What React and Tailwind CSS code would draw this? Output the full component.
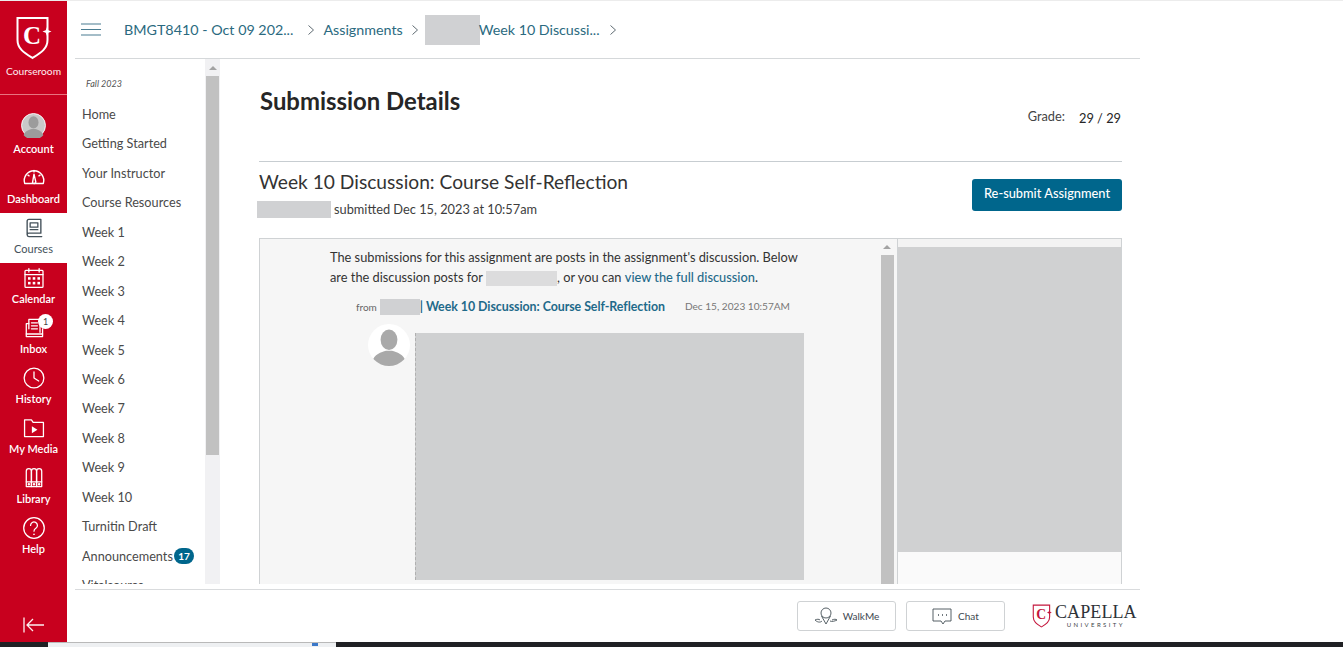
import React from "react";

const Ic = ({ children, s = 28 }) => (
  <svg width={s} height={s} viewBox="0 0 28 28" fill="none" stroke="currentColor" strokeWidth="1.5" strokeLinecap="round" strokeLinejoin="round">{children}</svg>
);

const Person = ({ fill = "#a5a5a5" }) => (
  <g fill={fill} stroke="none">
    <ellipse cx="14" cy="10.5" rx="5.6" ry="6.8" />
    <path d="M3 25c.8-5 6-6.2 9-7.2h4c3 1 8.2 2.2 9 7.2a15 15 0 0 1-22 0z" />
  </g>
);

const navItems = [
  ["Account", <svg key="a" width="29" height="29" viewBox="0 0 28 28"><circle cx="14" cy="14" r="13.4" fill="#c9c9c9" stroke="#fff" strokeWidth="1" /><Person fill="#9c9c9c" /></svg>],
  ["Dashboard", <Ic key="d" s={26}><path d="M4 21a10.5 10.5 0 1 1 20 0z" /><path d="M14 11l2 8.5a2 2 0 0 1-3.6.6z" /><path d="M14 7v1.5M7.5 12l1.2.8M20.5 12l-1.2.8" /></Ic>],
  ["Courses", <Ic key="c" s={24}><path d="M6 22V5.5A2 2 0 0 1 8 4h14v16H8a2 2 0 0 0-2 2 2 2 0 0 0 2 2h15" strokeWidth="1.6" /><rect x="9.5" y="8" width="9" height="5" /><path d="M9.5 16h9" /></Ic>],
  ["Calendar", <Ic key="cal" s={24}><rect x="3.5" y="5" width="21" height="20" rx="1" /><path d="M3.5 10h21M8 3v4M20 3v4" /><g fill="currentColor" stroke="none"><rect x="7" y="13" width="3" height="3" /><rect x="12.5" y="13" width="3" height="3" /><rect x="18" y="13" width="3" height="3" /><rect x="7" y="18.5" width="3" height="3" /><rect x="12.5" y="18.5" width="3" height="3" /><rect x="18" y="18.5" width="3" height="3" /></g></Ic>],
  ["Inbox", <Ic key="i" s={24}><path d="M8 15V4h13v15" /><path d="M11 8h7M11 11.5h7M11 15h7" /><path d="M8 9H5v12h19v-6" /><path d="M5 21v3h19v-3" /></Ic>],
  ["History", <Ic key="h" s={24}><circle cx="14" cy="14" r="11.5" /><path d="M14 7v7l5.5 3.5" /></Ic>],
  ["My Media", <Ic key="m" s={24}><path d="M3 24V4.5h8l2 3h12V24z" /><path d="M11.5 12v8l6.5-4z" fill="currentColor" stroke="none" /></Ic>],
  ["Library", <Ic key="l" s={24}><path d="M5 24V6a3 3 0 0 1 6 0v18z" /><path d="M11 24V6a3 3 0 0 1 6 0v18z" /><path d="M17 24V6a3 3 0 0 1 6 0v18z" /><path d="M5 18.5h18" /><circle cx="8" cy="21.3" r=".7" /><circle cx="14" cy="21.3" r=".7" /><circle cx="20" cy="21.3" r=".7" /></Ic>],
  ["Help", <svg key="q" width="24" height="24" viewBox="0 0 28 28" fill="none" stroke="currentColor" strokeWidth="1.5"><circle cx="14" cy="14" r="12" /><path d="M10 11a4 4 0 1 1 6.2 3.3c-1.4.9-2.2 1.7-2.2 3.4" strokeLinecap="round" /><circle cx="14" cy="21.3" r="1" fill="currentColor" stroke="none" /></svg>],
];

const courseNav = ["Home", "Getting Started", "Your Instructor", "Course Resources", "Week 1", "Week 2", "Week 3", "Week 4", "Week 5", "Week 6", "Week 7", "Week 8", "Week 9", "Week 10", "Turnitin Draft"];

const Chevron = () => (
  <svg width="8" height="12" viewBox="0 0 8 12" fill="none" stroke="#5f6b72" strokeWidth="1"><path d="M1.5 1.5 6.5 6l-5 4.5" /></svg>
);

const Shield = ({ w, h, stroke, cColor, size = 25 }) => (
  <svg width={w} height={h} viewBox="0 0 36 44" fill="none">
    <path d="M2 2h30v22c0 9-7 13-15 18C9 37 2 33 2 24z" stroke={stroke} strokeWidth="2" />
    <text x="16.5" y="28" textAnchor="middle" fontFamily="'Liberation Serif', serif" fontWeight="700" fontSize={size} fill={cColor} stroke="none">C</text>
    <path d="M31.5 11l1.3 3.2 3.2 1.3-3.2 1.3-1.3 3.2-1.3-3.2-3.2-1.3 3.2-1.3z" fill={cColor} stroke="none" />
  </svg>
);

export default function App() {
  return (
    <div className="w-[1343px] h-[647px] flex flex-col overflow-hidden bg-white text-[#3d3d3d] font-['Lato','Liberation_Sans',sans-serif]">
      <div className="flex h-[642px] min-h-0 border-t border-[#ececec]">
        <aside className="w-[67px] shrink-0 bg-[#c8001e] text-white flex flex-col">
          <div className="h-[94px] shrink-0 border-b border-[#e8737f] flex flex-col items-center pt-[15px]">
            <Shield w={37} h={44} stroke="#fff" cColor="#fff" />
            <span className="text-[10.2px] leading-[14px] mt-[4px] text-[#fdeef0]">Courseroom</span>
          </div>
          <nav className="flex flex-col pt-[18px]">
            {navItems.map(([label, icon]) => (
              <div key={label} className={`relative h-[50px] flex flex-col items-center justify-end pb-[7px] ${label === "Courses" ? "bg-white text-[#44515a]" : ""}`}>
                {icon}
                <span className={`text-[11px] leading-[14px] ${label === "Account" ? "mt-[4px]" : "mt-[2px]"} ${label === "Courses" ? "font-normal" : "font-semibold"}`}>{label}</span>
                {label === "Inbox" && (
                  <span className="absolute top-[1px] left-[38px] w-[15px] h-[15px] rounded-full bg-white text-[#444] text-[9px] leading-[15px] text-center">1</span>
                )}
              </div>
            ))}
          </nav>
          <div className="mt-auto pb-[8px] flex justify-center">
            <svg width="24" height="18" viewBox="0 0 24 18" fill="none" stroke="#fdeef0" strokeWidth="1.3"><path d="M2 1.5v15M22 9H5M11 3 5 9l6 6" /></svg>
          </div>
        </aside>

        <div className="w-[1073px] shrink-0 flex flex-col min-h-0">
          <header className="h-[58px] shrink-0 ml-[8px] border-b border-[#d5d8da] flex items-center text-[14.3px] text-[#2b6a80] pl-[6px]">
            <svg width="20" height="13" viewBox="0 0 20 13" stroke="#4a7d92" strokeWidth="1.2"><path d="M0 1h20M0 6.5h20M0 12h20" /></svg>
            <span className="ml-[23px]">BMGT8410 - Oct 09 202...</span>
            <span className="ml-[14px] mr-[8px]"><Chevron /></span>
            <span>Assignments</span>
            <span className="ml-[8px] mr-[6px]"><Chevron /></span>
            <span className="w-[55px] h-[30px] bg-[#d0d1d3]" />
            <span className="-ml-[1px] tracking-[-0.03px]">Week 10 Discussi...</span>
            <span className="ml-[9px]"><Chevron /></span>
          </header>

          <div className="flex flex-1 min-h-0">
            <div className="w-[153px] shrink-0 flex h-[525px] overflow-hidden">
              <div className="flex-1 pl-[15px] overflow-hidden">
                <p className="mt-[19px] ml-[4px] text-[9px] leading-[12px] italic text-[#555]">Fall 2023</p>
                <ul className="mt-[8px] text-[12.7px] leading-[19px] text-[#4a4a4a] flex flex-col gap-[10.45px] pt-[7px]">
                  {courseNav.map((n) => <li key={n}>{n}</li>)}
                  <li className="relative">
                    Announcements
                    <span className="absolute left-[92px] top-[1px] w-[20px] h-[16px] rounded-full bg-[#00668c] text-white text-[10px] font-bold leading-[16px] text-center">17</span>
                  </li>
                  <li>Vitalsource</li>
                </ul>
              </div>
              <div className="w-[15px] shrink-0 bg-[#f1f1f3] flex flex-col items-center">
                <div className="h-[17px] w-full flex justify-center items-center">
                  <span className="w-0 h-0 border-x-[4px] border-x-transparent border-b-[4px] border-b-[#a3a3a3]" />
                </div>
                <div className="w-[13px] h-[379px] bg-[#c1c1c1]" />
              </div>
            </div>

            <main className="flex-1 min-w-0 pl-[39px] pr-[18px] h-[525px] overflow-hidden">
              <div className="flex justify-between h-[103px] border-b border-[#c7cdd1]">
                <h1 className="text-[23.9px] leading-[30px] font-bold text-[#262626] mt-[27px] ml-[1px]">Submission Details</h1>
                <div className="flex items-start mt-[49px] text-[12.8px] pr-[1px]">
                  <span className="leading-[16px] text-[#444]">Grade:</span>
                  <span className="leading-[16px] ml-[14px] mt-[2px] text-[#262626]">29 / 29</span>
                </div>
              </div>
              <div className="flex justify-between items-start">
                <div>
                  <h2 className="text-[19.2px] leading-[24px] text-[#333] mt-[8px]">Week 10 Discussion: Course Self-Reflection</h2>
                  <div className="flex items-center mt-[6px] text-[12.8px] leading-[18px] text-[#3d3d3d] -ml-[2px]">
                    <span className="w-[74px] h-[17px] bg-[#d0d1d3] mr-[3px]" />
                    submitted Dec 15, 2023 at 10:57am
                  </div>
                </div>
                <button className="mt-[17px] w-[150px] h-[32px] pb-[2px] rounded-[3px] bg-[#00668c] text-white text-[12.8px] font-medium">Re-submit Assignment</button>
              </div>

              <section className="mt-[20px] h-[347px] border border-[#cfd2d4] flex overflow-hidden">
                <div className="w-[637px] shrink-0 bg-[#f6f6f6] flex">
                  <div className="w-[621px] shrink-0 pl-[70px]">
                    <p className="w-[480px] text-[12.8px] leading-[20px] text-[#333] mt-[8px]">
                      The submissions for this assignment are posts in the assignment's discussion. Below are the discussion posts for <span className="inline-block align-middle w-[71px] h-[15px] bg-[#dcdcdd]" />, or you can <span className="text-[#1f6a8a] font-medium">view the full discussion</span>.
                    </p>
                    <div className="flex items-center ml-[26px] mt-[12px] h-[16px]">
                      <span className="text-[10px] text-[#666]">from</span>
                      <span className="w-[40px] h-[16px] bg-[#d0d1d3] ml-[3px]" />
                      <span className="text-[12.4px] font-bold text-[#1f6a8a] tracking-[-0.05px]">| Week 10 Discussion: Course Self-Reflection</span>
                      <span className="text-[10.1px] text-[#777] ml-[20px]">Dec 15, 2023 10:57AM</span>
                    </div>
                    <div className="flex ml-[38px] mt-[9px] items-start">
                      <div className="w-[42px] h-[42px] rounded-full bg-white overflow-hidden shrink-0">
                        <svg width="42" height="42" viewBox="0 0 28 28"><Person fill="#a9a9a9" /></svg>
                      </div>
                      <div className="ml-[5px] mt-[9px] w-[389px] h-[247px] bg-[#cfd0d1] border-l border-dashed border-[#b0b0b0]" />
                    </div>
                  </div>
                  <div className="w-[14px] -ml-[1px] shrink-0 flex flex-col items-center">
                    <div className="h-[16px] w-full flex justify-center items-center">
                      <span className="w-0 h-0 border-x-[4px] border-x-transparent border-b-[4px] border-b-[#a3a3a3]" />
                    </div>
                    <div className="w-[13px] flex-1 bg-[#c1c1c1]" />
                  </div>
                </div>
                <div className="flex-1 border-l border-[#cfd2d4] bg-[#fafafa]">
                  <div className="h-[8px] bg-[#f3f3f3]" />
                  <div className="h-[305px] bg-[#d0d1d2]" />
                </div>
              </section>
            </main>
          </div>

          <footer className="h-[53px] shrink-0 ml-[8px] border-t border-[#d9dbdd] flex items-center justify-end pr-[3px]">
            <button className="w-[99px] h-[30px] border border-[#cfd2d4] rounded-[3px] flex items-center justify-center gap-[5px] text-[10px] text-[#3d4850]">
              <svg width="24" height="20" viewBox="0 0 24 20" fill="none" stroke="#444f56" strokeWidth="0.9"><circle cx="12" cy="7" r="5" /><path d="M7.5 10 12 18l4.5-8M8 15c-2 2-5 1-7-1 2-1 4-1 5 0M16 15c2 1 5 0 7-1-1-1-3-1-5 0" /></svg>
              WalkMe
            </button>
            <button className="ml-[10px] w-[99px] h-[30px] border border-[#cfd2d4] rounded-[3px] flex items-center justify-center gap-[6px] text-[10px] text-[#3d4850]">
              <svg width="20" height="17" viewBox="0 0 20 17" fill="none" stroke="#444f56" strokeWidth="0.9"><path d="M1 1h18v12h-6l-2 3-2-3H1z" /><path d="M6 7h1M10 7h1M14 7h1" strokeWidth="1.4" /></svg>
              Chat
            </button>
            <div className="ml-[27px] flex items-center w-[105px]">
              <Shield w={20} h={24} stroke="#c4163c" cColor="#c4163c" />
              <div className="ml-[3px] flex flex-col items-center">
                <span className="font-['Liberation_Serif',serif] text-[18px] leading-[18px] text-[#2e3338] tracking-[0.1px]">CAPELLA</span>
                <span className="text-[6px] leading-[8px] tracking-[2.4px] text-[#3e4449]">UNIVERSITY</span>
              </div>
            </div>
          </footer>
        </div>
      </div>

      <div className="h-[5px] shrink-0 flex bg-[#202124]">
        <div className="w-[48px]" />
        <div className="w-[288px] bg-[#eef0f2] border-t border-[#b9b9b9] flex justify-end pr-[18px]">
          <span className="w-[6px] h-[3px] bg-[#3b78c9]" />
        </div>
      </div>
    </div>
  );
}
